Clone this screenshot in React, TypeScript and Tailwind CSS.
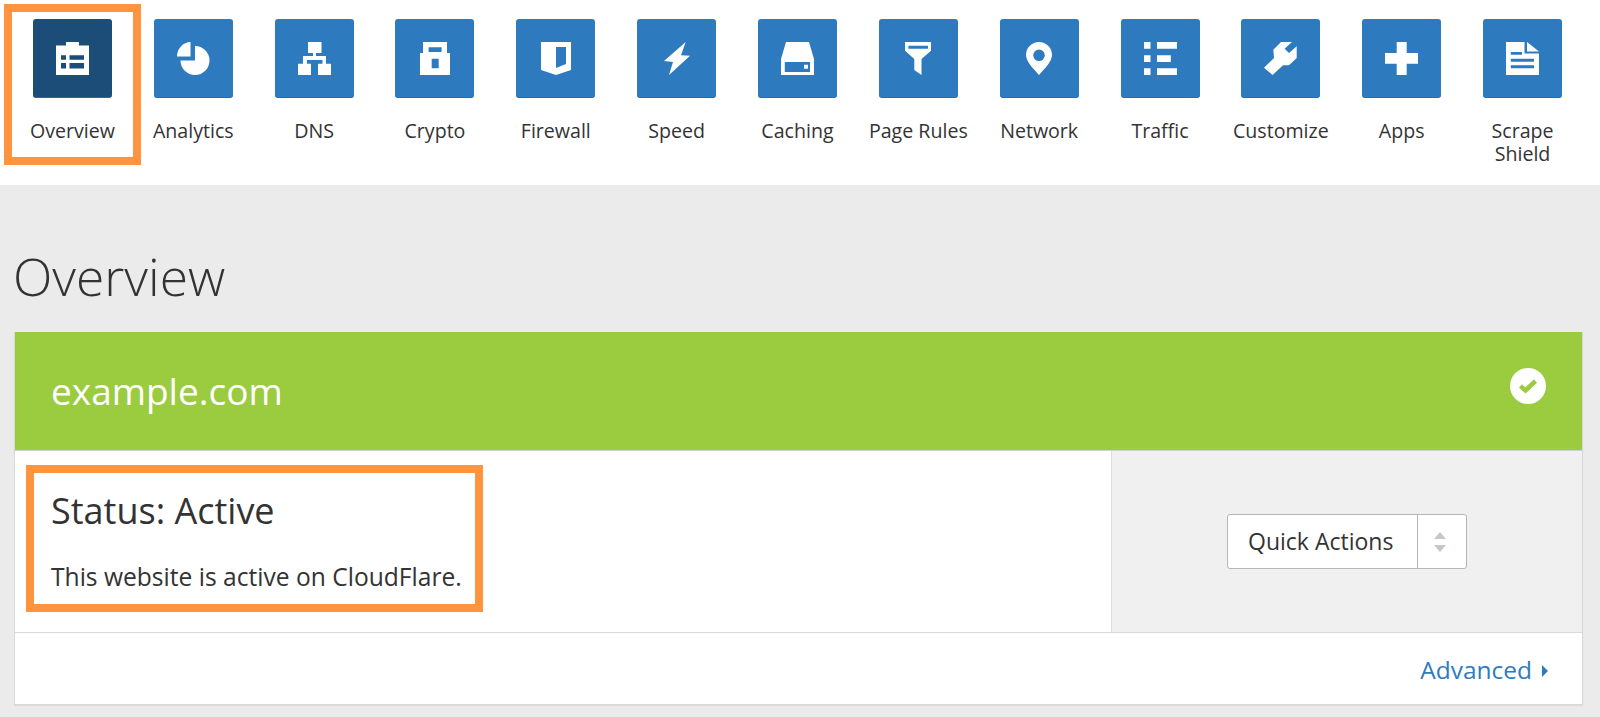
const navItems: { label: string; width: number; shape: React.ReactNode }[] = [
  {
    label: 'Overview',
    width: 33,
    shape: (
      <path
        fillRule="evenodd"
        d="M10 0h13v3.500h10V33H0V3.500h10zM5 13.300v4.400h5v-4.400zM13.500 13.300v4.400H28v-4.400zM5 21v5.600h5V21zM13.500 21v5.600H28V21z"
      />
    ),
  },
  {
    label: 'Analytics',
    width: 33,
    shape: (
      <>
        <path d="M13.500 14.500H0A14 14.500 0 0 1 13.500 0Z" />
        <path d="M18 4V18.500H3.500A14.500 14.500 0 1 0 18 4Z" />
      </>
    ),
  },
  {
    label: 'DNS',
    width: 33,
    shape: (
      <path
        fillRule="evenodd"
        d="M10 0h13.500v11H18v3h10v7.700h5V33H20V21.700h4.500V18H9v3.700h4V33H0V21.700h5V14h10v-3h-5z"
      />
    ),
  },
  {
    label: 'Crypto',
    width: 30,
    shape: (
      <path
        fillRule="evenodd"
        d="M3 0h24v11h3v22H0V11h3zM8.600 5.300V10h13V5.300zM11.700 16.700v9.600h7v-9.600z"
      />
    ),
  },
  {
    label: 'Firewall',
    width: 30,
    shape: <path fillRule="evenodd" d="M0 0h30v28l-15 5-15-5zM15 5v21l10-4V5z" />,
  },
  {
    label: 'Speed',
    width: 26,
    shape: <path d="M21.700 0 0 19l9 1-4 13 21-19.300-9-.4z" />,
  },
  {
    label: 'Caching',
    width: 33,
    shape: (
      <path
        fillRule="evenodd"
        d="M5 0h23l5 17v16H0V17zM3.800 20v10H29V20zM23 22.700h4v4h-4z"
      />
    ),
  },
  {
    label: 'Page Rules',
    width: 26,
    shape: (
      <path
        fillRule="evenodd"
        d="M0 0h26v8.700L16.500 17v16l-7.200-5V17L0 8.700zM3.400 3.700v3H23v-3z"
      />
    ),
  },
  {
    label: 'Network',
    width: 26,
    shape: (
      <path
        fillRule="evenodd"
        d="M13 0a13 13 0 0 1 13 13c0 7-8 14-13 20C8 27 0 20 0 13A13 13 0 0 1 13 0zM13 7.500a5.800 5.800 0 1 0 0 11.600 5.800 5.800 0 0 0 0-11.600z"
      />
    ),
  },
  {
    label: 'Traffic',
    width: 33,
    shape: (
      <path d="M0 0h6.500v6.700H0zM13 0h20v6.700H13zM0 13.300h6.500V20H0zM13 13.300h13.800V20H13zM0 26.300h6.500V33H0zM13 26.300h20V33H13z" />
    ),
  },
  {
    label: 'Customize',
    width: 33,
    shape: (
      <path d="M0 25.700 10 16 9.300 7.700 17 0h11l-7.400 6.700L25 11l7.700-6.700V16L25 23.300h-6L8.600 33z" />
    ),
  },
  {
    label: 'Apps',
    width: 33,
    shape: <path d="M11.700 0h10v11H33v10.700H21.700V33h-10V21.700H0V11h11.700z" />,
  },
  {
    label: 'Scrape Shield',
    width: 33,
    shape: (
      <>
        <path
          fillRule="evenodd"
          d="M0 0h18.500v11.500H33V33H0zM4.800 10v2.700H16V10zM4.800 16.700v3H28v-3zM4.800 23.300v3H28v-3z"
        />
        <path d="M21 0l12 9.500H21z" />
      </>
    ),
  },
];

function NavItem({ label, width, shape, active }: { label: string; width: number; shape: React.ReactNode; active: boolean }) {
  return (
    <div className="relative w-[120.85px] shrink-0 flex flex-col items-center">
      {active && <div className="absolute left-[-8px] top-[-15px] w-[137px] h-[161px] border-[8px] border-[#ff9440]" />}
      <div
        className={`w-[79px] h-[79px] rounded-[3px] flex items-center justify-center border-b border-[#1f6db5] ${
          active ? 'bg-[#1c4c78] border-[#1c4c78]' : 'bg-[#2e7abf]'
        }`}
      >
        <svg width={width} height={33} viewBox={`0 0 ${width} 33`} fill={'#fff'}>
          {shape}
        </svg>
      </div>
      <div className="mt-[21px] w-[110px] text-center text-[19.600px] leading-[23px] text-[#333]">{label}</div>
    </div>
  );
}

export default function App() {
  return (
    <div className="h-[717px] overflow-hidden bg-[#ebebeb] font-['Open_Sans',sans-serif] text-[#333]">
      {/* Top nav */}
      <div className="h-[185px] bg-white pt-[19px] pl-[12px] flex">
        {navItems.map((item, i) => (
          <NavItem key={item.label} {...item} active={i === 0} />
        ))}
      </div>

      <div className="pl-[14px] pr-[17px]">
        <h1 className="pt-[53px] pb-[1px] text-[51.500px] leading-[76px] font-light text-[#333] -ml-[1px]">Overview</h1>

        <div className="mt-[17px] border border-[#d9d9d9] border-t-0 bg-white shadow-[0_1px_1px_rgba(0,0,0,0.06)]">
          <div className="h-[119px] bg-[#9bcb3f] border-b border-[#d0d0d0] pl-[36px] pr-[36px] flex items-center justify-between">
            <div className="text-[37px] font-medium text-white">example.com</div>
            <div className="-mt-[10px] w-[36px] h-[36px] rounded-full bg-white flex items-center justify-center">
              <svg width="20" height="16" viewBox="0 0 20 16" fill="none">
                <path d="M2.500 8 7.500 12.500 17.500 3" stroke="#9bcb3f" strokeWidth="4.500" />
              </svg>
            </div>
          </div>

          <div className="flex h-[182px] border-b border-[#d9d9d9]">
            <div className="flex-1 pl-[11px] pt-[14px]">
              <div className="w-[457px] h-[147px] border-[8px] border-[#ff9440] pl-[17px]">
                <div className="pt-[16px] text-[36px] leading-[44px]">Status: Active</div>
                <div className="mt-[27px] text-[24.600px] leading-[34px] whitespace-nowrap">This website is active on CloudFlare.</div>
              </div>
            </div>
            <div className="w-[471px] bg-[#f0f0f0] border-l border-[#dcdcdc] flex items-center justify-center">
              <div className="flex h-[55px] w-[240px] rounded-[3px] border border-[#b5b5b5] bg-white">
                <div className="flex-1 flex items-center pl-[20px] text-[23px]">Quick Actions</div>
                <div className="w-[49px] pr-[5px] border-l border-[#b5b5b5] flex flex-col items-center justify-center gap-[6px]">
                  <div className="w-0 h-0 border-x-[6px] border-x-transparent border-b-[7px] border-b-[#c4c8c6]" />
                  <div className="w-0 h-0 border-x-[6px] border-x-transparent border-t-[7px] border-t-[#c4c8c6]" />
                </div>
              </div>
            </div>
          </div>

          <div className="h-[71px] pt-[4px] flex items-center justify-end pr-[34px] gap-[10px] text-[24.500px] text-[#2f7bbf]">
            <span>Advanced</span>
            <div className="w-0 h-0 border-y-[6px] border-y-transparent border-l-[6px] border-l-[#2f7bbf]" />
          </div>
        </div>
      </div>
    </div>
  );
}
